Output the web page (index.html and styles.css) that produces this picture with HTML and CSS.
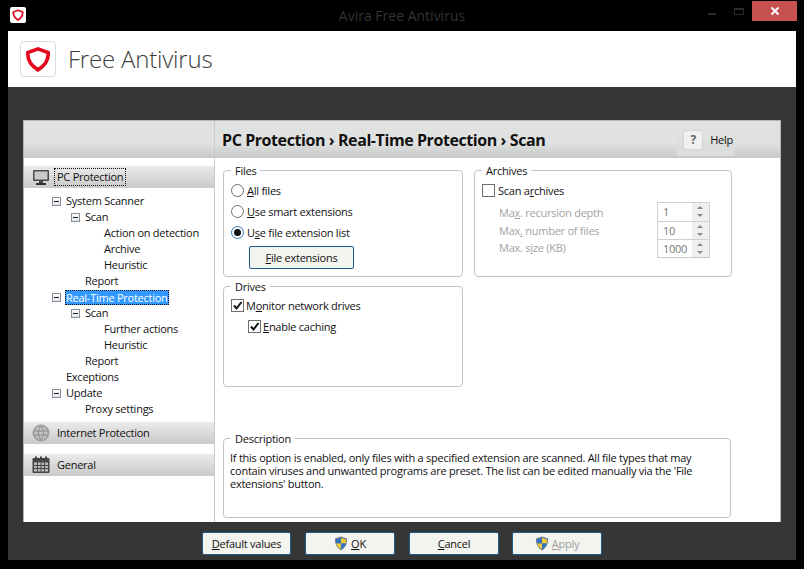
FILE: index.html
```html
<!DOCTYPE html>
<html lang="en">
<head>
<meta charset="utf-8">
<title>Avira Free Antivirus</title>
<link rel="stylesheet" href="styles.css">
</head>
<body>
<div class="window">
  <div class="titlebar">
    <span class="app-icon"><svg width="12" height="12" viewBox="0 0 36 36"><path class="shield" d="M18 4 L32 9 C33 19 28 27 18 33 C8 27 3 19 4 9 Z"/></svg></span>
    <span class="title">Avira Free Antivirus</span>
    <span class="win-min"></span>
    <span class="win-max"></span>
    <span class="win-close"><svg width="10" height="8" viewBox="0 0 10 8"><path d="M1.5 .5 L8.5 7.5 M8.5 .5 L1.5 7.5" stroke="#fff" stroke-width="2"/></svg></span>
  </div>
  <header class="brand">
    <span class="logo"><svg width="26" height="26" viewBox="0 0 36 36"><path class="shield" d="M18 4 L32 9 C33 19 28 27 18 33 C8 27 3 19 4 9 Z"/></svg></span>
    <span class="brand-name">Free Antivirus</span>
  </header>
  <div class="stage">
    <div class="panel">
      <div class="topbar">
        <div class="topbar-left"></div>
        <h1 class="heading">PC Protection › Real-Time Protection › Scan</h1>
        <div class="help"><span class="help-btn">?</span><span class="help-label">Help</span></div>
      </div>
      <div class="panel-body">
        <nav class="sidebar">
          <div class="section first">
            <svg class="section-icon" width="18" height="18" viewBox="0 0 18 18"><rect x="1" y="2" width="16" height="11" rx="1" fill="#4a4a4a"/><rect x="2.5" y="3.5" width="13" height="8" fill="#c9c9c9"/><rect x="7" y="13" width="4" height="2" fill="#4a4a4a"/><rect x="4" y="15" width="10" height="2" fill="#333"/></svg>
            <span class="section-label focused">PC Protection</span>
          </div>
          <ul class="tree">
            <li class="l1"><i class="exp"></i>System Scanner</li>
            <li class="l2"><i class="exp"></i>Scan</li>
            <li class="l3">Action on detection</li>
            <li class="l3">Archive</li>
            <li class="l3">Heuristic</li>
            <li class="l2">Report</li>
            <li class="l1"><i class="exp"></i><span class="selected">Real-Time Protection</span></li>
            <li class="l2"><i class="exp"></i>Scan</li>
            <li class="l3">Further actions</li>
            <li class="l3">Heuristic</li>
            <li class="l2">Report</li>
            <li class="l1">Exceptions</li>
            <li class="l1"><i class="exp"></i>Update</li>
            <li class="l2">Proxy settings</li>
          </ul>
          <div class="section">
            <svg class="section-icon" width="18" height="18" viewBox="0 0 18 18"><circle cx="9" cy="9" r="8.5" fill="#a0a0a0"/><circle cx="9" cy="9" r="6.5" fill="#c4c4c4"/><path d="M2.5 7 H15.5 M2.5 11 H15.5 M9 2.5 C5.5 6 5.5 12 9 15.5 C12.5 12 12.5 6 9 2.5" fill="none" stroke="#8a8a8a" stroke-width="1"/></svg>
            <span class="section-label">Internet Protection</span>
          </div>
          <div class="section">
            <svg class="section-icon" width="18" height="18" viewBox="0 0 18 18"><rect x="0.5" y="2" width="17" height="15" rx="1" fill="#444"/><rect x="3" y="0.5" width="2" height="3" fill="#444"/><rect x="8" y="0.5" width="2" height="3" fill="#444"/><rect x="13" y="0.5" width="2" height="3" fill="#444"/><path d="M2 6.5 H16 V15.5 H2 Z" fill="#bbb"/><path d="M2 9.5 H16 M2 12.5 H16 M5.5 6.5 V15.5 M9 6.5 V15.5 M12.5 6.5 V15.5" stroke="#444" stroke-width="1"/></svg>
            <span class="section-label">General</span>
          </div>
        </nav>
        <main class="content">
          <div class="col">
            <section class="group files">
              <span class="group-title">Files</span>
              <label class="row"><i class="radio"></i><span><u>A</u>ll files</span></label>
              <label class="row"><i class="radio"></i><span><u>U</u>se smart extensions</span></label>
              <label class="row"><i class="radio on"></i><span>U<u>s</u>e file extension list</span></label>
              <button class="btn ext-btn"><span><u>F</u>ile extensions</span></button>
            </section>
            <section class="group drives">
              <span class="group-title">Drives</span>
              <label class="row"><i class="check"><svg width="11" height="11" viewBox="0 0 11 11"><path d="M2 5.5 L4.5 8.5 L9.5 2" fill="none" stroke="#111" stroke-width="2"/></svg></i><span>M<u>o</u>nitor network drives</span></label>
              <label class="row indent"><i class="check"><svg width="11" height="11" viewBox="0 0 11 11"><path d="M2 5.5 L4.5 8.5 L9.5 2" fill="none" stroke="#111" stroke-width="2"/></svg></i><span><u>E</u>nable caching</span></label>
            </section>
          </div>
          <section class="group archives">
            <span class="group-title">Archives</span>
            <label class="row"><i class="check plain"></i><span>Scan a<u>r</u>chives</span></label>
            <div class="limits">
              <div class="limit-labels">
                <span>Ma<u>x</u>. recursion depth</span>
                <span>Max<u>.</u> number of files</span>
                <span>Max. s<u>i</u>ze (KB)</span>
              </div>
              <div class="spinners">
                <div class="spinner"><span class="spin-val">1</span><span class="spin-btns"><i class="up"></i><i class="down"></i></span></div>
                <div class="spinner"><span class="spin-val">10</span><span class="spin-btns"><i class="up"></i><i class="down"></i></span></div>
                <div class="spinner"><span class="spin-val">1000</span><span class="spin-btns"><i class="up"></i><i class="down"></i></span></div>
              </div>
            </div>
          </section>
          <section class="group description">
            <span class="group-title">Description</span>
            <p>If this option is enabled, only files with a specified extension are scanned. All file types that may contain viruses and unwanted programs are preset. The list can be edited manually via the 'File extensions' button.</p>
          </section>
        </main>
      </div>
    </div>
    <footer class="actions">
      <button class="btn"><span><u>D</u>efault values</span></button>
      <button class="btn"><svg class="uac" width="14" height="15" viewBox="0 0 14 15"><path d="M7 .5 L13 2.5 C13.5 8 11 12 7 14.5 C3 12 .5 8 1 2.5 Z" fill="#6d7f8f"/><path d="M7 2 L7 7.5 H2.2 C2 6 2 5 2.2 3.4 Z" fill="#2f72c4"/><path d="M7 2 L11.8 3.4 C12 5 12 6 11.8 7.5 H7 Z" fill="#f2c92e"/><path d="M2.2 7.5 H7 V13 C4.5 11.6 2.8 10 2.2 7.5 Z" fill="#f2c92e"/><path d="M7 7.5 H11.8 C11.2 10 9.5 11.6 7 13 Z" fill="#2f72c4"/></svg><span><u>O</u>K</span></button>
      <button class="btn"><span><u>C</u>ancel</span></button>
      <button class="btn disabled"><svg class="uac" width="14" height="15" viewBox="0 0 14 15"><path d="M7 .5 L13 2.5 C13.5 8 11 12 7 14.5 C3 12 .5 8 1 2.5 Z" fill="#6d7f8f"/><path d="M7 2 L7 7.5 H2.2 C2 6 2 5 2.2 3.4 Z" fill="#2f72c4"/><path d="M7 2 L11.8 3.4 C12 5 12 6 11.8 7.5 H7 Z" fill="#f2c92e"/><path d="M2.2 7.5 H7 V13 C4.5 11.6 2.8 10 2.2 7.5 Z" fill="#f2c92e"/><path d="M7 7.5 H11.8 C11.2 10 9.5 11.6 7 13 Z" fill="#2f72c4"/></svg><span><u>A</u>pply</span></button>
    </footer>
  </div>
</div>
</body>
</html>
```
FILE: styles.css
```css
* { box-sizing: border-box; }
html, body { margin: 0; height: 100%; }
body {
  background: #000;
  font-family: "Open Sans", "Noto Sans", sans-serif;
  font-size: 11px;
  letter-spacing: -.25px;
  color: #111;
  overflow: hidden;
}
u { text-underline-offset: 1px; }
.window { width: 804px; height: 569px; display: flex; flex-direction: column; }

.titlebar { height: 31px; flex: none; display: flex; align-items: flex-start; position: relative; }
.app-icon {
  width: 16px; height: 16px; margin: 7px 0 0 10px; background: #fff; border-radius: 2px;
  display: flex; align-items: center; justify-content: center;
}
.shield { fill: none; stroke: #e3051b; stroke-width: 5; stroke-linejoin: miter; }
.title {
  position: absolute; left: 0; right: 0; top: 6px; text-align: center;
  font-size: 14px; line-height: 19px; color: #333; letter-spacing: 0;
}
.win-min { width: 8px; height: 2px; background: #2a2a2a; margin: 13px 0 0 auto; }
.win-max { width: 10px; height: 7px; border: 1px solid #2a2a2a; border-top-width: 2px; margin: 8px 0 0 18px; }
.win-close {
  width: 45px; height: 20px; background: #c75050; margin: 1px 7px 0 8px;
  display: flex; align-items: center; justify-content: center;
}

.brand {
  flex: none; height: 56px; margin: 0 8px; background: #fff;
  display: flex; align-items: center; padding-left: 12px;
}
.logo {
  width: 36px; height: 36px; border: 1px solid #d8dde2; border-radius: 4px;
  display: flex; align-items: center; justify-content: center;
}
.brand-name { margin: -1px 0 0 12px; font-size: 24px; font-weight: 300; color: #3c3c3c; letter-spacing: -.2px; }

.stage { flex: 1; margin: 0 8px 9px; background: #363636; display: flex; flex-direction: column; padding: 33px 15px 0; min-height: 0; }
.panel { height: 402px; flex: none; background: #fff; border: 1px solid #b4b4b4; border-bottom: 0; display: flex; flex-direction: column; }

.topbar {
  flex: none; height: 37px; display: flex; align-items: center; position: relative;
  background: linear-gradient(#e0e2e1 0, #e0e2e1 60%, #c6c8c7 100%);
}
.topbar-left { width: 191px; height: 100%; border-right: 1px solid #c6c9da; flex: none; }
.heading { margin: 0 0 0 7px; font-size: 16px; font-weight: 700; color: #111; letter-spacing: -.42px; white-space: nowrap; }
.help { margin-left: auto; margin-right: 47px; display: flex; align-items: center; gap: 7px; position: relative; }
.help::before { content: ""; position: absolute; left: -6px; right: -2px; top: 10px; height: 16px; background: #dcdedd; }
.help-btn {
  position: relative; width: 20px; height: 20px; border: 1px solid #d4d4d4; border-radius: 3px; background: #f1f1f1;
  text-align: center; font-weight: 700; font-size: 12px; line-height: 18px; color: #666;
}
.help-label { position: relative; color: #111; }

.panel-body { flex: 1; display: flex; min-height: 0; }
.sidebar { width: 191px; flex: none; border-right: 1px solid #c6c9da; padding-top: 8px; }
.section {
  height: 22px; display: flex; align-items: center; padding-left: 8px; margin-top: 10px;
  background: linear-gradient(#ebebeb, #c9c9c9);
}
.section.first { margin-top: 0; }
.tree + .section { margin-top: 5px; }
.section-icon { flex: none; }
.section-label { margin-left: 6px; padding: 0 1px; line-height: 16px; }
.section-label.focused { outline: 1px dotted #111; outline-offset: 0; margin-left: 5px; padding: 0 2px; }
.tree { list-style: none; margin: 5px 0 0; padding: 0; }
.tree li { height: 16px; line-height: 16px; display: flex; align-items: center; position: relative; white-space: nowrap; }
.tree .l1 { padding-left: 42px; }
.tree .l2 { padding-left: 61px; }
.tree .l3 { padding-left: 80px; }
.exp {
  position: absolute; width: 9px; height: 9px; top: 4px; border: 1px solid #8a8f9a; background: linear-gradient(#fff, #dfe3e8);
}
.exp::after { content: ""; position: absolute; left: 1px; right: 1px; top: 3px; height: 1px; background: #223; }
.l1 .exp { left: 28px; }
.l2 .exp { left: 47px; }
.selected { background: #3399ff; color: #fff; outline: 1px dotted #111; outline-offset: -1px; margin-left: -1px; padding: 0 1px; line-height: 15px; }

.content {
  flex: 1; padding: 12px 0 0 8px; display: grid; grid-template-columns: 240px 258px; column-gap: 11px;
  align-content: start;
}
.col { display: flex; flex-direction: column; gap: 9px; }
.group { border: 1px solid #c3c3d0; border-radius: 4px; padding: 0 7px; }
.group-title { display: block; width: max-content; background: #fff; margin: -8px 0 0; padding: 0 4px; line-height: 15px; }
.files { height: 107px; }
.drives { height: 101px; }
.archives { height: 107px; }
.description { grid-column: 1 / 3; margin-top: 51px; height: 80px; width: 508px; }
.description p { margin: 5px 0 0 -1px; line-height: 13px; }

.row { display: flex; align-items: center; height: 21px; gap: 3px; white-space: nowrap; }
.files .row:first-of-type, .archives .row:first-of-type { margin-top: 2px; }
.drives .row { gap: 2px; }
.drives .row:first-of-type { margin-top: 1px; }
.indent { padding-left: 17px; }
.radio { width: 13px; height: 13px; border-radius: 50%; border: 1px solid #6e6e6e; background: #fff; flex: none; position: relative; }
.radio.on { border-color: #2a7ab8; }
.radio.on::after { content: ""; position: absolute; inset: 2px; border-radius: 50%; background: #111; }
.check { width: 13px; height: 13px; border: 1px solid #6e6e6e; background: #fff; flex: none; display: flex; align-items: center; justify-content: center; }

.btn {
  font: inherit; letter-spacing: inherit; color: #111; background: #f3f3ef; border: 1px solid #1f5a8c; border-radius: 2px;
  height: 23px; padding: 0; display: flex; align-items: center; justify-content: center; gap: 3px;
}
.ext-btn { width: 105px; margin: 3px 0 0 18px; }

.limits { display: flex; justify-content: space-between; padding: 1px 14px 0 17px; }
.limit-labels { display: flex; flex-direction: column; color: #a3a3a3; padding-top: 2px; }
.limit-labels span { height: 17.5px; line-height: 17px; }
.spinners { width: 53px; border: 1px solid #d0d0d0; border-bottom-color: #c8c8c8; }
.spinner { height: 18px; display: flex; }
.spinner + .spinner { border-top: 1px solid #d0d0d0; }
.spin-val { flex: 1; padding-left: 5px; line-height: 18px; color: #777; }
.spin-btns { width: 18px; display: flex; flex-direction: column; background: #f0f0f0; border-left: 1px solid #fff; }
.spin-btns i { flex: 1; position: relative; display: block; background: #efefef; }
.spin-btns i::after { content: ""; position: absolute; left: 5px; border-left: 3px solid transparent; border-right: 3px solid transparent; }
.spin-btns .up::after { top: 3px; border-bottom: 3px solid #888; }
.spin-btns .down::after { top: 2px; border-top: 3px solid #888; }

.actions { flex: 1; display: flex; gap: 14px; padding: 10px 0 0 179px; }
.actions .btn { width: 90px; }
.actions .btn:first-child { width: 89px; }
.actions .btn:last-child { margin-left: -1px; }
.disabled { color: #a0a0a0; }
.uac { flex: none; }
```
